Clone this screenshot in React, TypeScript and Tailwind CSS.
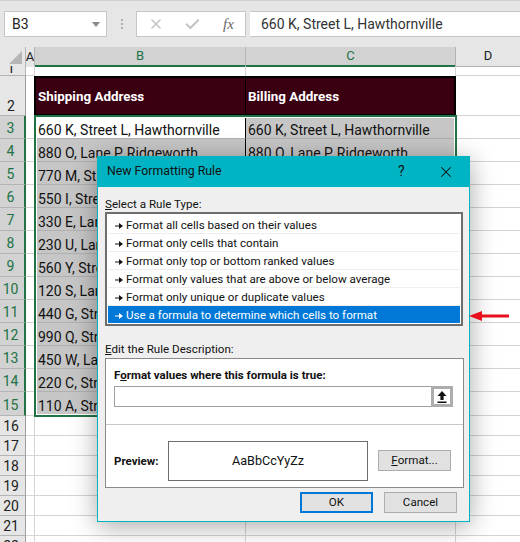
import { Check, X } from 'lucide-react';

const addresses = [
  '660 K, Street L, Hawthornville',
  '880 O, Lane P, Ridgeworth',
  '770 M, Street N, Oakdale',
  '550 I, Street J, Lakeview',
  '330 E, Lane F, Fairmont',
  '230 U, Lane V, Milford',
  '560 Y, Street Z, Ashland',
  '120 S, Lane T, Brookside',
  '440 G, Street H, Clayton',
  '990 Q, Street R, Dayton',
  '450 W, Lane X, Easton',
  '220 C, Street D, Glenwood',
  '110 A, Street B, Hillcrest',
];

const ruleTypes = [
  'Format all cells based on their values',
  'Format only cells that contain',
  'Format only top or bottom ranked values',
  'Format only values that are above or below average',
  'Format only unique or duplicate values',
  'Use a formula to determine which cells to format',
];

const gridRow = 'grid grid-cols-[26px_9px_211px_210px_64px]';

function RowHead({ n, active }: { n: number; active?: boolean }) {
  return (
    <div
      className={
        active
          ? 'flex items-end justify-center pr-[3px] bg-[#d2d2d2] text-[#217346] border-b border-[#b4b4b4] border-r-2 border-r-[#217346] text-[14px] leading-[20px]'
          : 'flex items-end justify-center pr-[3px] bg-[#e6e6e6] text-[#222] border-b border-[#b4b4b4] border-r border-r-[#9e9e9e] text-[14px] leading-[18px]'
      }
    >
      {n}
    </div>
  );
}

function RuleArrow() {
  return (
    <svg width="8" height="6" viewBox="0 0 8 6" className="shrink-0">
      <path d="M0 2.5h4V0l4 3-4 3V3.5H0z" fill="currentColor" />
    </svg>
  );
}

function EmptyRows() {
  return (
    <>
      {[16, 17, 18, 19, 20, 21, 22].map((n) => (
        <div key={n} className={`${gridRow} h-[20px]`}>
          <RowHead n={n} />
          <div className="border-b border-r border-[#d4d4d4]" />
          <div className="border-b border-r border-[#d4d4d4]" />
          <div className="border-b border-r border-[#d4d4d4]" />
          <div className="border-b border-[#d4d4d4]" />
        </div>
      ))}
    </>
  );
}

function Sheet() {
  return (
    <div>
      <div className={`${gridRow} h-[19px] text-[13px] bg-[#e6e6e6]`}>
        <div className="relative border-r border-[#b4b4b4]">
          <svg width="14" height="14" viewBox="0 0 14 14" className="absolute left-[9px] top-[4px]">
            <path d="M13 0v13H0z" fill="#b5b5b5" />
          </svg>
        </div>
        <div className="flex justify-center overflow-hidden border-r border-[#b4b4b4] leading-[19px] text-[#222] bg-[#e6e6e6]">A</div>
        <div className="flex justify-center leading-[18px] bg-[#d2d2d2] text-[#217346] border-b-2 border-[#217346] border-r border-r-[#b4b4b4]">B</div>
        <div className="flex justify-center leading-[18px] bg-[#d2d2d2] text-[#217346] border-b-2 border-[#217346] border-r border-r-[#b4b4b4]">C</div>
        <div className="flex justify-center leading-[18px] text-[#222] border-b border-[#b4b4b4]">D</div>
      </div>

      <div className={`${gridRow} h-[10px] overflow-hidden`}>
        <div className="flex justify-center pr-[3px] bg-[#e6e6e6] border-b border-r border-[#b4b4b4] text-[14px] leading-[4px] text-[#222]">1</div>
        <div className="border-b border-r border-[#d4d4d4]" />
        <div className="border-r border-[#d4d4d4]" />
        <div className="border-r border-[#d4d4d4]" />
        <div className="border-b border-[#d4d4d4]" />
      </div>

      <div className={`${gridRow} h-[40px]`}>
        <RowHead n={2} />
        <div className="border-r border-[#d4d4d4]" />
        <div className="flex items-center pl-[2px] pt-[2px] -ml-px bg-[#3a0012] border-y-2 border-l-2 border-black border-r border-r-black text-white font-bold text-[13.4px]">
          Shipping Address
        </div>
        <div className="flex items-center pl-[2px] pt-[2px] bg-[#3a0012] border-y-2 border-r-2 border-black text-white font-bold text-[13.4px]">
          Billing Address
        </div>
        <div className="border-b border-[#d4d4d4]" />
      </div>

      {addresses.map((address, i) => (
        <div key={address} className={`${gridRow} ${i === 12 ? 'h-[24px]' : 'h-[23px]'}`}>
          <RowHead n={i + 3} active />
          <div className="border-b border-r border-[#d4d4d4]" />
          <div className={`flex items-center pl-[3px] pt-[6px] whitespace-nowrap overflow-hidden text-[14px] text-[#111] border-b border-[#b0b0b0] border-r border-r-black ${i === 0 ? 'bg-white' : 'bg-[#c6c6c6]'}`}>
            {address}
          </div>
          <div className="flex items-center pl-[2px] pt-[6px] whitespace-nowrap overflow-hidden text-[14px] text-[#111] bg-[#c6c6c6] border-b border-[#b0b0b0]">
            {address}
          </div>
          <div className="border-b border-[#d4d4d4]" />
        </div>
      ))}
      <EmptyRows />
    </div>
  );
}

function Dialog() {
  return (
    <div className="absolute left-[97px] top-[156px] w-[373px] h-[366px] bg-[#efefef] border border-[#00b4c4] border-t-0 shadow-[0_4px_24px_rgba(0,0,0,0.35)] text-[11.6px] text-[#111]">
      <div className="flex items-center h-[31px] -mx-px bg-[#00b4c4] pl-[10px] text-[12.3px]">
        <span className="flex-1">New Formatting Rule</span>
        <span className="w-[10px] text-[14px] mr-[29px]">?</span>
        <X size={18} strokeWidth={1.4} className="mr-[15px]" />
      </div>

      <div className="pl-[7px] pr-[7px]">
        <div className="mt-[7px] h-[19px] leading-[21px]"><span className="underline">S</span>elect a Rule Type:</div>
        <div className="-mt-px w-[358px] h-[114px] border-2 border-[#6e6e6e] bg-white pt-[2px] px-[1px]">
          {ruleTypes.slice(0, 5).map((rule) => (
            <div key={rule} className="flex items-center gap-[3px] h-[18px] pl-[7px] pt-[3px] border-b border-[#eeeeee] whitespace-nowrap">
              <RuleArrow />
              {rule}
            </div>
          ))}
          <div className="flex items-center gap-[3px] h-[17px] pl-[7px] pt-[2px] bg-[#0078d7] text-white whitespace-nowrap">
            <RuleArrow />
            {ruleTypes[5]}
          </div>
        </div>

        <div className="mt-[15px] h-[17px] leading-[17px]"><span className="underline">E</span>dit the Rule Description:</div>
        <div className="w-[359px] h-[130px] border border-[#8a8a8a] bg-white">
          <div className="pt-[7px] pl-[8px] pr-[10px] h-[65px]">
            <div className="font-bold h-[20px] leading-[18px] text-[11.5px]">F<span className="underline">o</span>rmat values where this formula is true:</div>
            <div className="flex h-[21px] w-[339px] border border-[#a0a0a0] bg-white">
              <div className="flex-1" />
              <div className="flex items-center justify-center w-[22px] -my-px -mr-px border-[3px] border-[#adadad] bg-white">
                <svg width="12" height="12" viewBox="0 0 12 12">
                  <path d="M6 0l4.5 5H7.6v4H4.4V5H1.5zM1.5 10.5h9V12h-9z" fill="#111" />
                </svg>
              </div>
            </div>
          </div>
          <div className="border-t border-[#c8c8c8]" />
          <div className="flex items-start pl-[8px] h-[62px]">
            <span className="font-bold mt-[28px] w-[54px] text-[11.5px]">Preview:</span>
            <div className="mt-[16px] flex items-center justify-center w-[200px] h-[40px] border border-[#6e6e6e] text-[12.6px]">AaBbCcYyZz</div>
            <div className="mt-[25px] ml-[10px] flex items-center justify-center w-[73px] h-[21px] border border-[#adadad] bg-[#e1e1e1]"><span className="underline">F</span>ormat...</div>
          </div>
        </div>

        <div className="mt-[4px] flex justify-end pr-[5px] gap-[11px]">
          <div className="flex items-center justify-center w-[73px] h-[21px] border-2 border-[#0078d7] bg-[#e1e1e1]">OK</div>
          <div className="flex items-center justify-center w-[73px] h-[21px] border border-[#adadad] bg-[#e1e1e1]">Cancel</div>
        </div>
      </div>
    </div>
  );
}

export default function App() {
  return (
    <div className="relative w-[520px] h-[542px] overflow-hidden bg-white font-['Roboto','Noto_Sans',sans-serif]">
      <div className="flex items-start h-[47px] pt-[11px] bg-[#e6e6e6] border-t border-[#d0d0d0] text-[#222] text-[14px]">
        <div className="flex items-center justify-between ml-[4px] w-[103px] h-[26px] -mt-px bg-white border border-[#c6c6c6] pl-[7px] pr-[6px]">
          B3
          <svg width="8" height="5" viewBox="0 0 8 5"><path d="M0 0h8L4 5z" fill="#8a8a8a" /></svg>
        </div>
        <div className="flex flex-col gap-[2px] mx-[14px] mt-[7px]">
          <span className="w-[2px] h-[2px] bg-[#b0b0b0]" />
          <span className="w-[2px] h-[2px] bg-[#b0b0b0]" />
          <span className="w-[2px] h-[2px] bg-[#b0b0b0]" />
        </div>
        <div className="flex items-center w-[110px] h-[26px] -mt-px -ml-[1px] bg-white border border-[#c6c6c6] pl-[11px] text-[#c4c4c4]">
          <X size={16} strokeWidth={2.4} />
          <Check size={17} strokeWidth={3} className="ml-[20px]" />
          <span className="ml-[22px] font-['Liberation_Serif',serif] italic text-[#666] text-[15px]">fx</span>
        </div>
        <div className="flex items-center flex-1 h-[26px] -mt-px ml-[4px] bg-white border-y border-[#c6c6c6] pl-[11px] text-[14px] text-[#333]">
          660 K, Street L, Hawthornville
        </div>
      </div>

      <Sheet />

      {/* selection outline */}
      <div className="absolute left-[34px] top-[115px] w-[423px] h-[302px] border-2 border-[#217346] shadow-[inset_0_0_0_1px_white] pointer-events-none" />

      <Dialog />

      <svg width="42" height="10" viewBox="0 0 42 10" className="absolute left-[469px] top-[311px]">
        <path d="M0 5l13-5v3.5h27v3H13V10z" fill="#e8101c" />
      </svg>
    </div>
  );
}
